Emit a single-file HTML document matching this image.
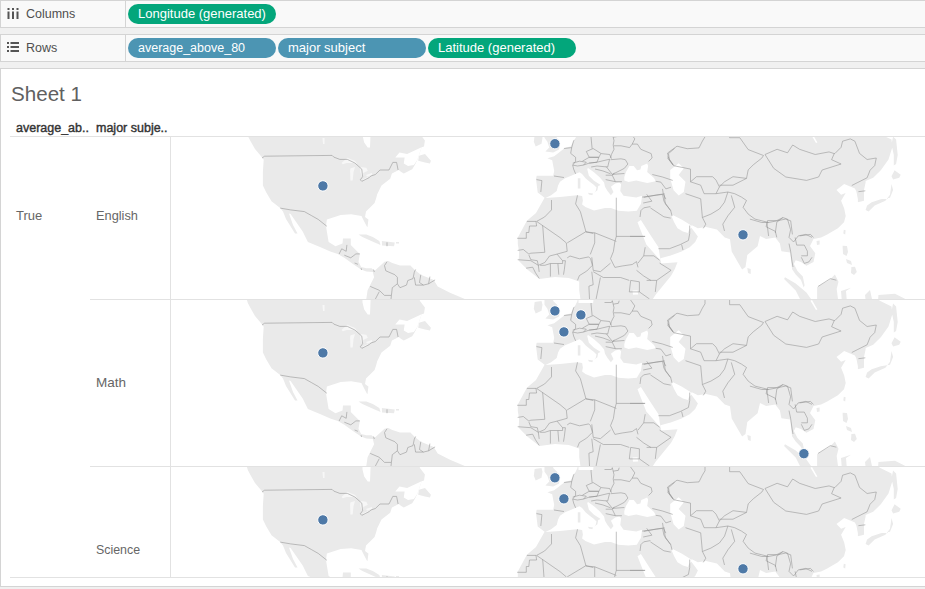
<!DOCTYPE html>
<html><head><meta charset="utf-8"><style>
*{margin:0;padding:0;box-sizing:border-box}
body{width:925px;height:589px;overflow:hidden;background:#f0f0f0;position:relative;font-family:"Liberation Sans",sans-serif}
.a{position:absolute;white-space:nowrap}
.shelf{position:absolute;left:0;width:925px;background:#f9f9f9;border-top:1px solid #d4d4d4;border-bottom:1px solid #d4d4d4;border-left:1px solid #d4d4d4}
.div{position:absolute;left:124px;top:0;bottom:0;width:1px;background:#d4d4d4}
.lbl{position:absolute;left:26px;font-size:12px;color:#4f4f4f;line-height:14px}
.pill{position:absolute;height:20px;border-radius:10px;color:#fff;font-size:13px;line-height:20px;padding-left:10px;white-space:nowrap}
.g{background:#03a67b} .b{background:#4c95b3}
.sheet{position:absolute;left:0;top:68px;width:925px;height:519px;background:#fff;border-top:1px solid #d4d4d4;border-left:1px solid #d4d4d4;border-bottom:1px solid #d4d4d4}
.hl{position:absolute;height:1px;background:#e2e2e2}
.vl{position:absolute;width:1px;background:#e2e2e2}
.rl{position:absolute;font-size:12.4px;color:#666;line-height:14px}
</style></head><body>
<div class="shelf" style="top:0;height:28px"><div class="div"></div></div>
<div class="shelf" style="top:34px;height:28px"><div class="div"></div></div>
<svg class="a" style="left:7px;top:8px" width="12" height="11" viewBox="0 0 12 11"><rect x="0.5" y="0" width="2" height="2" fill="#555"/><rect x="5" y="0" width="2" height="2" fill="#555"/><rect x="9.5" y="0" width="2" height="2" fill="#555"/><rect x="0.5" y="3.5" width="2" height="7.5" fill="#555"/><rect x="5" y="3.5" width="2" height="7.5" fill="#555"/><rect x="9.5" y="3.5" width="2" height="7.5" fill="#555"/></svg>
<div class="lbl" style="top:7px;font-size:12.5px">Columns</div>
<svg class="a" style="left:7px;top:42px" width="12" height="10" viewBox="0 0 12 10"><rect x="0" y="0" width="2" height="2" fill="#555"/><rect x="3.5" y="0" width="8.5" height="2" fill="#555"/><rect x="0" y="4" width="2" height="2" fill="#555"/><rect x="3.5" y="4" width="8.5" height="2" fill="#555"/><rect x="0" y="8" width="2" height="2" fill="#555"/><rect x="3.5" y="8" width="8.5" height="2" fill="#555"/></svg>
<div class="lbl" style="top:41px;font-size:12.5px">Rows</div>
<div class="pill g" style="left:128px;top:4px;width:148px">Longitude (generated)</div>
<div class="pill b" style="left:128px;top:38px;width:148px;font-size:12.5px">average_above_80</div>
<div class="pill b" style="left:278px;top:38px;width:148px">major subject</div>
<div class="pill g" style="left:428px;top:38px;width:148px">Latitude (generated)</div>
<div class="sheet"></div>
<div class="a" style="left:11px;top:82px;font-size:20.6px;color:#606060;line-height:23px">Sheet 1</div>
<div class="a" style="left:16px;top:121px;font-size:12.5px;color:#333;-webkit-text-stroke:0.4px #333;line-height:14px">average_ab..</div>
<div class="a" style="left:96px;top:121px;font-size:12.5px;color:#333;-webkit-text-stroke:0.4px #333;line-height:14px">major subje..</div>
<div class="hl" style="left:10px;top:136px;width:915px"></div>
<div class="hl" style="left:90px;top:299px;width:835px"></div>
<div class="hl" style="left:90px;top:466px;width:835px"></div>
<div class="hl" style="left:10px;top:577px;width:915px"></div>
<div class="vl" style="left:170px;top:136px;height:441px"></div>
<div class="rl" style="left:16px;top:209px;font-size:13px">True</div>
<div class="rl" style="left:96px;top:209px;font-size:12.8px">English</div>
<div class="rl" style="left:96px;top:376px;font-size:13.5px">Math</div>
<div class="rl" style="left:96px;top:543px;font-size:12.4px">Science</div>
<svg width="925" height="589" style="position:absolute;left:0;top:0">
<defs>
<g id="w"><path d="M246.7,290.0 419.8,290.0 419.8,300.7 424.9,307.5 424.0,313.4 421.6,314.3 417.3,327.0 414.8,332.1 412.2,336.3 403.8,340.6 401.2,339.0 398.8,337.0 391.9,340.5 390.2,345.7 381.5,352.6 377.2,361.3 376.3,364.7 374.6,369.9 366.0,378.6 365.0,384.0 368.4,386.4 367.5,394.2 366.7,393.3 363.2,386.4 361.5,382.9 351.1,381.2 340.7,382.0 326.9,386.4 326.0,393.3 328.6,408.9 335.5,413.2 342.5,410.6 343.0,405.4 350.8,405.4 350.8,411.9 359.8,420.9 358.5,428.7 361.1,433.9 366.3,435.2 371.5,435.2 374.7,437.8 384.5,428.7 388.4,428.1 392.3,430.0 400.0,432.6 410.4,432.6 414.3,436.5 420.8,441.7 433.8,446.9 437.7,453.4 450.0,459.8 464.8,466.0 470.0,475.0 360.0,475.0 366.3,466.0 367.6,457.3 370.2,452.1 374.1,444.3 372.8,439.1 366.3,438.5 361.1,436.5 353.3,431.3 344.3,424.8 337.8,421.0 330.3,418.4 320.0,414.0 307.9,408.9 302.7,398.5 290.6,381.0 289.0,380.5 293.0,392.0 297.5,400.5 295.0,400.5 286.0,386.0 283.0,378.5 280.2,375.1 271.5,368.2 266.3,359.6 262.9,352.6 262.9,338.8 263.7,326.7 261.1,323.2 255.0,316.0 251.0,309.0 247.8,303.0 246.7,299.0ZM358.5,401.5 366.3,401.5 372.8,404.1 379.3,408.0 380.6,411.9 374.1,409.3 362.4,404.1ZM381.9,408.0 394.8,409.5 394.0,413.2 382.0,412.5ZM396.0,409.0 399.0,409.0 399.0,410.5 396.0,410.5ZM879.3,290.0 879.3,300.5 885.4,303.6 891.5,306.6 892.3,314.3 888.5,326.5 880.8,337.2 873.2,344.8 865.6,347.9 865.6,349.4 864.0,357.1 864.0,367.8 857.9,369.3 857.9,366.2 856.4,358.6 854.9,355.5 844.2,351.0 836.5,357.1 841.1,361.7 845.7,360.1 841.1,367.8 844.2,375.4 845.7,383.0 844.0,389.2 837.9,395.3 827.2,401.4 821.1,404.4 813.5,406.0 810.0,413.1 815.3,420.2 813.5,429.1 806.4,432.7 801.0,429.1 795.7,427.3 793.9,430.9 797.5,438.0 802.8,443.4 804.6,452.3 803.7,454.5 801.0,447.0 795.7,441.6 792.1,436.2 791.2,429.1 790.3,419.5 781.4,418.2 779.9,410.6 775.3,404.4 766.1,406.0 760.0,403.0 757.6,413.3 747.3,421.9 745.5,434.0 742.1,436.6 738.6,430.6 731.7,418.4 730.0,406.3 724.8,404.6 721.3,401.1 716.9,396.6 706.0,393.9 697.9,395.3 692.4,392.6 689.7,392.6 693.8,398.0 697.9,403.4 695.2,408.9 689.7,414.3 681.6,418.4 670.7,422.4 660.5,425.2 661.2,430.6 677.5,429.2 674.8,436.0 671.1,442.7 655.6,461.7 650.4,470.0 581.0,470.0 579.2,457.1 579.2,448.5 568.8,445.0 555.0,444.1 539.4,445.9 527.3,436.4 518.7,427.7 519.1,418.9 517.8,411.1 517.8,404.6 526.9,387.8 536.0,380.0 544.6,364.7 537.7,359.6 536.0,346.0 536.7,342.8 553.2,342.8 554.2,337.9 552.2,327.2 547.4,325.3 554.2,323.3 562.9,316.5 565.9,314.6 570.7,313.6 572.7,309.7 574.6,306.8 577.5,301.0 577.5,290.0ZM534.7,301.9 541.5,301.0 542.5,304.8 541.5,310.7 535.7,313.6 533.8,308.7ZM544.5,290.0 553.2,290.0 553.2,301.0 557.1,304.8 560.0,311.6 559.0,316.5 553.2,319.4 545.4,318.5 549.3,314.6 547.4,308.7 544.5,304.8ZM891.5,351.0 893.1,357.1 890.0,364.7 880.8,366.2 871.7,369.3 867.1,372.4 865.6,376.9 868.6,378.5 874.7,372.4 885.4,367.8 890.0,361.7ZM894.6,337.2 900.7,341.8 899.2,344.8 893.1,346.4 891.5,343.3ZM893.1,303.6 896.1,306.6 897.7,321.9 896.1,331.1 893.8,332.6 893.8,321.9 891.5,311.2ZM747.3,434.9 750.7,436.0 750.7,440.9 748.0,440.0ZM843.8,396.8 845.6,397.2 845.2,401.4 843.3,400.5ZM816.5,408.0 819.6,407.5 819.6,411.5 817.0,412.1ZM842.6,412.8 847.0,413.0 848.0,419.0 846.5,423.0 843.0,421.0ZM851.4,434.0 855.0,433.8 856.8,439.0 854.0,441.9 851.0,440.0ZM785.0,444.3 795.7,450.5 806.4,459.4 811.7,467.0 812.0,470.0 802.0,470.0 795.7,457.6 784.1,446.0ZM817.1,454.1 829.6,447.0 834.9,441.6 838.5,448.7 836.7,455.9 838.5,470.0 817.1,470.0ZM841.0,458.0 851.0,454.7 846.0,458.0 847.0,470.0 842.0,470.0ZM865.0,462.0 870.0,457.0 872.0,466.0 866.0,470.0ZM878.4,462.0 895.0,460.8 905.4,466.0 905.0,470.0 878.0,470.0ZM846.0,426.0 851.0,428.0 852.0,432.0 847.0,430.0Z" fill="#eaeaea"/><path d="M362.5,290.0 371.0,290.0 370.0,314.6 367.7,314.6 364.2,309.4 362.5,302.5ZM395.3,324.4 399.5,319.4 407.1,321.0 421.6,314.3 417.3,327.0 413.9,332.1 408.0,333.0 403.8,330.4 404.6,324.4ZM545.5,365.1 551.1,362.3 556.7,358.1 558.1,352.5 560.0,348.7 565.1,345.3 575.3,341.0 579.5,339.3 582.1,341.0 585.5,345.3 589.7,348.7 594.0,352.1 596.5,354.6 595.7,358.0 594.0,359.7 597.4,357.2 598.2,352.9 600.7,352.1 594.0,347.8 588.9,342.7 587.2,335.9 588.0,335.1 594.0,339.3 599.9,344.4 604.1,349.5 605.0,353.8 607.5,358.0 610.9,362.3 613.5,358.9 610.9,353.8 615.2,350.4 619.4,349.5 621.1,351.2 620.3,358.0 623.5,362.7 636.2,364.4 642.1,362.7 641.0,370.7 636.8,377.8 628.4,378.5 618.4,377.7 610.9,375.0 605.0,375.0 594.0,377.5 585.5,374.1 582.1,371.6 582.9,367.4 582.1,363.1 577.0,362.3 560.0,364.0ZM624.3,344.1 626.0,339.0 629.4,333.0 633.7,333.0 637.1,337.3 640.4,336.4 641.3,333.0 647.2,330.5 648.1,333.0 647.2,339.0 654.0,344.9 655.7,348.3 647.2,350.0 636.2,347.4 628.6,349.1 624.3,347.4ZM678.7,330.2 683.8,335.2 678.7,342.0 685.5,348.8 683.8,359.0 678.7,362.4 673.6,357.3 670.2,345.4 670.2,337.0ZM578.5,290.0 595.0,290.0 593.1,302.9 578.5,302.9ZM637.5,389.2 640.9,387.1 650.4,402.1 658.5,414.3 660.0,424.0 661.0,428.0 658.5,425.2 646.3,411.6ZM672.1,381.7 681.6,386.5 689.7,391.5 692.0,394.0 689.0,397.0 688.0,400.0 682.9,398.5 677.5,395.3 674.0,389.0 671.5,383.0ZM810.5,300.7 812.0,300.0 817.4,309.4 816.0,310.0ZM632.5,457.5 637.5,457.2 638.2,461.5 633.0,461.8Z" fill="#fff"/><path d="M341.4,330.1 347.4,324.8 355.0,327.9 357.3,330.9 352.7,330.1 346.7,330.1 342.9,331.3ZM350.4,335.4 355.0,333.9 353.5,339.2 352.7,347.6 350.4,347.6 350.1,337.7ZM360.3,333.9 366.3,334.7 367.9,337.7 363.3,340.0 362.6,345.3 360.3,339.2ZM361.0,347.6 369.4,343.0 365.6,346.8ZM366.0,342.0 372.0,340.0 372.0,342.0 367.0,343.5ZM322.5,305.0 324.5,305.0 324.5,311.0 323.0,311.0Z" fill="#f7f7f7"/><path d="M588.0,359.7 593.1,360.6 592.3,362.3 588.9,361.4ZM577.8,345.3 580.4,345.3 580.4,355.5 577.8,355.5ZM419.0,322.7 425.0,321.0 430.9,327.8 430.0,330.4 425.0,329.6 418.2,327.8Z" fill="#eaeaea"/><path d="M262.0,325.0 264.6,323.2 332.1,322.4 333.8,324.1 339.8,326.4 347.4,326.4 355.0,330.1 361.8,336.2 362.6,343.8 360.3,346.8 361.8,348.3 369.4,344.5 370.9,343.0 375.4,341.5 380.0,337.0 389.0,337.0 392.8,329.4 396.6,329.4 398.1,337.0M280.2,375.1 290.6,376.9 304.4,378.6 311.3,382.5 318.2,386.4 326.9,393.3M346.9,411.9 346.2,418.3 341.7,415.8 339.1,421.0M344.3,422.2 350.8,424.8 355.9,420.9 359.8,420.9M354.6,430.0 357.9,431.3M361.1,435.2 361.5,437.0M373.6,436.6 374.3,439.0M387.0,409.3 387.0,413.2M387.0,428.7 384.5,432.6 385.8,437.8 394.8,441.7 397.4,444.3 397.4,450.8 400.0,454.7 406.5,452.1 407.8,447.5 413.0,445.6 414.3,439.1 415.6,436.5M414.3,444.3 415.6,452.1 423.4,452.1 428.6,450.8 435.1,446.9M420.8,441.7 419.5,449.5 423.4,452.1M429.9,443.6 428.6,450.8M397.4,450.8 392.3,454.7 391.0,466.0M370.2,453.4 379.3,457.3 384.5,462.4 391.0,462.4M379.3,458.6 375.4,466.0M563.9,315.5 571.7,314.6 570.7,320.4 575.6,324.3 575.6,328.2 572.7,332.1 573.6,336.0 575.6,340.8M571.7,314.6 573.6,307.8 574.6,306.8M572.7,330.1 579.5,328.2 586.3,329.2 583.4,332.1 577.5,333.0 572.7,332.1M591.1,303.0 591.1,304.8 592.1,315.5M586.3,318.5 593.1,315.5 600.9,320.4 598.9,324.3 589.2,324.3 586.3,318.5M582.4,328.2 589.2,324.3 598.9,324.3 597.0,329.2 589.2,330.1 583.4,332.1M589.2,330.1 597.0,329.2 609.6,326.2 607.7,334.0 597.0,333.0 591.1,334.0M595.0,336.0 602.8,337.9 610.6,340.8M614.3,340.1 612.2,342.2 615.4,348.7 621.9,348.7M605.7,342.2 612.2,342.2M605.7,346.6 615.4,348.7M536.5,346.6 541.9,347.6 540.8,359.0M554.0,343.0 564.0,344.5M646.7,361.3 651.9,368.2 643.2,370.0M526.9,388.4 536.0,388.4 536.6,393.0 529.5,393.0 528.8,399.5 526.3,399.5 526.3,405.3 517.2,405.3M542.5,392.5 542.9,395.0 543.9,409.0 544.8,419.3 530.8,420.2 528.9,421.1M536.6,388.4 560.0,404.6 566.3,409.9 567.2,418.3 557.0,421.1M567.2,409.9 585.9,398.7 593.4,400.6M557.0,421.1 549.5,423.0 544.8,429.5 538.3,432.3 537.3,427.7 530.8,426.7 528.9,422.1M517.7,417.4 523.3,416.5 528.9,421.1M517.7,426.7 530.8,427.7 538.3,432.3 539.2,438.9M526.1,435.2 532.7,434.2 535.5,439.8 539.2,445.4M540.1,432.3 544.8,432.3 550.4,430.5 550.4,443.6M557.9,430.5 558.8,441.7M557.0,421.1 562.6,427.7 562.6,430.5 557.9,430.5 550.4,430.5M562.6,427.7 565.4,427.7 564.4,436.1 563.5,441.7M567.2,424.9 570.0,423.0 579.4,425.8 588.7,423.9 590.6,425.8 592.4,432.3 586.8,438.0 579.4,442.6 577.5,447.3M616.3,364.7 616.3,403.4 645.2,403.4M586.0,399.0 594.7,399.8 616.3,408.4M616.3,403.4 614.9,408.4 613.4,418.5 610.5,425.7 614.9,434.4M594.7,399.8 594.7,409.9 590.3,421.4M591.8,424.3 593.2,437.3 600.4,438.7 610.5,430.1M614.9,434.4 622.1,433.0 632.2,431.5 636.5,428.6 638.0,434.4M636.5,437.3 643.7,443.0 650.9,447.4M645.2,414.2 643.7,422.8 638.0,430.1M643.7,422.8 653.8,422.8 659.6,427.2M659.6,430.1 671.1,437.3 656.7,447.4 646.6,447.4M656.7,447.4 655.3,458.9M593.2,438.7 603.3,444.5 620.6,444.5 629.3,447.4M630.7,447.4 639.4,448.8 639.4,458.9 629.3,458.9 630.7,447.4M600.4,444.5 596.1,466.0M591.8,438.7 593.2,451.7 588.9,453.2 589.5,466.0M639.4,458.9 649.5,466.0M630.0,403.4 644.9,403.4M650.4,374.9 663.9,383.8 670.7,385.1M642.2,364.1 662.6,361.4 663.9,368.1 670.7,377.6 672.1,383.1M640.9,377.6 643.6,374.9 650.4,373.6M658.5,415.7 669.4,415.7 680.2,411.6 688.4,407.5 689.7,400.7 689.7,392.6M681.6,411.6 683.0,417.0M663.9,360.0 665.3,370.9 670.7,377.6M668.5,325.1 667.6,320.0 677.0,313.2 687.2,315.7 699.0,314.9 702.4,308.1 705.0,303.8 705.0,299.0M729.6,299.0 729.6,304.7 739.8,304.7 748.2,316.6 763.5,322.5M667.6,325.1 673.6,332.7 690.5,336.1 690.5,348.8 696.5,343.7 712.6,343.7 716.0,347.1 719.4,353.9 724.5,348.8 733.0,343.7 746.5,345.4 748.2,336.9 753.3,331.8 761.8,325.1 763.5,322.5M690.5,348.8 700.7,352.2 704.1,360.7 716.0,360.7 719.4,353.9M685.5,360.7 700.7,365.8 702.4,384.5 705.8,391.2M716.0,360.7 727.9,359.0 724.5,369.2 719.4,376.0 710.9,381.1 702.4,384.5M731.3,362.4 734.7,374.3 727.9,382.8 722.8,391.2 724.5,398.0M727.9,359.0 734.7,360.7 741.5,364.1 746.5,367.5 743.1,374.3 748.2,381.1 755.0,386.1 768.6,389.5 785.6,386.1 790.7,387.8 792.4,401.4M749.9,386.1 761.8,389.5 768.6,389.5M766.9,389.5 768.6,403.0M719.4,352.2 733.0,352.2 746.5,345.4M765.0,321.5 777.1,316.3 787.5,319.8 792.7,312.0 799.6,316.3 815.2,321.5 829.0,318.9 834.2,320.6 831.6,326.7 841.1,331.0 822.1,337.0 818.6,344.0 806.5,347.4 785.8,344.0 773.7,335.3 765.0,321.5M834.2,320.6 835.0,320.4 841.1,314.3 842.6,308.2 850.3,305.9 854.9,308.2 859.5,320.4 867.1,326.5 876.3,325.0 874.7,332.6 870.1,337.2 867.1,344.8 857.9,349.4 851.8,352.5M858.4,358.7 865.3,357.8M766.1,393.8 767.6,387.6 776.8,387.6 782.9,384.6 787.5,386.1 790.6,396.8 789.0,404.4 793.6,409.0 798.2,402.9 805.8,401.4 812.0,404.4M766.1,393.8 775.3,398.3 776.8,404.4M782.9,384.6 776.8,389.2 775.3,399.9M789.0,410.6 790.6,418.2 792.1,428.9 793.0,434.0M795.1,404.4 796.7,412.1 804.3,412.1 807.4,418.2 807.4,422.8 801.3,422.8M801.3,424.3 804.3,430.4 808.9,428.9 812.0,424.3M799.7,402.9 810.4,401.4 813.5,404.4M818.1,453.4 830.3,445.7 836.4,447.2M652.3,341.5 662.5,344.0 672.7,347.4M655.7,348.3 660.8,349.1 665.9,355.9 671.0,354.2M662.5,355.9 663.3,361.0 656.6,361.9 643.8,364.4M663.3,361.0 665.9,366.1M667.6,323.7 673.5,332.2M577.5,362.3 575.6,370.9 580.4,378.7 586.0,399.0M551.5,367.0 551.5,376.9 544.6,384.0 536.6,388.4M640.9,377.6 640.0,384.0M705.8,391.2 703.3,395.3M604.5,302.5 611.4,302.5 612.3,300.7 613.2,304.2 618.4,303.3 619.2,300.7M613.2,304.2 614.0,307.7 613.2,312.0 614.0,316.3 611.4,321.5 610.6,325.0M614.0,312.8 621.0,312.8 629.6,314.6 632.2,311.1M630.5,299.9 634.8,305.9 632.2,311.1 637.4,311.1 640.8,316.3 651.2,320.6 652.1,325.0 648.6,328.4M601.1,320.6 609.7,321.5 611.4,325.8M610.6,326.7 621.0,325.8 625.3,326.7 627.9,331.0 624.4,335.3 621.0,337.1 612.3,341.4 606.2,333.6M612.3,341.4 624.4,340.5M674.6,315.4 668.5,320.6 669.4,326.7 672.9,331.9" fill="none" stroke="#8f8f8f" stroke-width="0.55"/></g>
<clipPath id="c1"><rect x="171" y="137" width="754" height="162"/></clipPath>
<clipPath id="c2"><rect x="171" y="300" width="754" height="166"/></clipPath>
<clipPath id="c3"><rect x="171" y="467" width="754" height="110"/></clipPath>
</defs>
<g clip-path="url(#c1)"><use href="#w" transform="translate(0,-167)"/><circle cx="322.9" cy="185.9" r="5.2" fill="#4e79a7" stroke="#fff" stroke-width="1"/><circle cx="554.9" cy="143.7" r="5.2" fill="#4e79a7" stroke="#fff" stroke-width="1"/><circle cx="743" cy="234.8" r="5.2" fill="#4e79a7" stroke="#fff" stroke-width="1"/></g>
<g clip-path="url(#c2)"><use href="#w"/><circle cx="322.9" cy="352.9" r="5.2" fill="#4e79a7" stroke="#fff" stroke-width="1"/><circle cx="554.9" cy="310.9" r="5.2" fill="#4e79a7" stroke="#fff" stroke-width="1"/><circle cx="580.9" cy="314.9" r="5.2" fill="#4e79a7" stroke="#fff" stroke-width="1"/><circle cx="563.9" cy="331.9" r="5.2" fill="#4e79a7" stroke="#fff" stroke-width="1"/><circle cx="803.9" cy="453.7" r="5.2" fill="#4e79a7" stroke="#fff" stroke-width="1"/></g>
<g clip-path="url(#c3)"><use href="#w" transform="translate(0,167)"/><circle cx="322.9" cy="519.9" r="5.2" fill="#4e79a7" stroke="#fff" stroke-width="1"/><circle cx="554.9" cy="477.8" r="5.2" fill="#4e79a7" stroke="#fff" stroke-width="1"/><circle cx="563.9" cy="498.8" r="5.2" fill="#4e79a7" stroke="#fff" stroke-width="1"/><circle cx="743" cy="568.8" r="5.2" fill="#4e79a7" stroke="#fff" stroke-width="1"/></g>
</svg>
</body></html>
